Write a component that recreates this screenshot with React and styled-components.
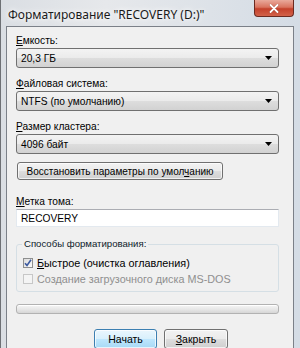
import React from 'react';
import styled, {createGlobalStyle} from 'styled-components';

const Global = createGlobalStyle`
  html, body {
    margin: 0;
    padding: 0;
  }
  body {
    background: #dfe3e8;
    font-family: "Noto Sans", "Open Sans", sans-serif;
    color: #000;
  }
`;

const Window = styled.div`
  width: 300px;
  height: 348px;
  overflow: hidden;
  display: flex;
  flex-direction: column;
  box-sizing: border-box;
  border-left: 1px solid #6d7074;
  background: linear-gradient(90deg, #dadee3 0%, #e6e8eb 35%, #dde2e8 70%, #d4dce5 100%);
`;

const TitleBar = styled.div`
  height: 26px;
  flex: none;
  display: flex;
  justify-content: space-between;
  align-items: flex-start;
  padding: 0 6px 0 7px;
`;

const Title = styled.div`
  margin-top: 7px;
  font-size: 12px;
  line-height: 15px;
  color: #1a1a1a;
  white-space: nowrap;
  text-shadow: 0 0 8px #fff, 0 0 4px #fff;
`;

const Close = styled.div`
  width: 40px;
  height: 17px;
  box-sizing: border-box;
  border: 1px solid #6b2a20;
  border-top: none;
  border-radius: 0 0 4px 4px;
  background: linear-gradient(180deg, #e9a99b 0%, #d9735f 45%, #c4412b 55%, #d2624a 100%);
  display: flex;
  align-items: center;
  justify-content: center;
`;

const Client = styled.div`
  flex: 1;
  margin: 0 6px 0 5px;
  border: 1px solid #7b8088;
  border-bottom: none;
  background: #f0f0f0;
  padding: 7px 14px 0 9px;
  display: flex;
  flex-direction: column;
  font-family: "Liberation Sans", Arial, sans-serif;
  font-size: 10.2px;
  white-space: nowrap;
`;

const Label = styled.div`
  line-height: 14px;
  height: 14px;
  color: #000;
  margin-top: ${p => p.$top || 0}px;
`;

const Key = styled.span`
  text-decoration: underline;
  text-underline-offset: 1px;
`;

const Combo = styled.div`
  height: 20px;
  box-sizing: border-box;
  border: 1px solid #707070;
  border-radius: 3px;
  background: linear-gradient(180deg, #f3f3f3 0%, #ebebeb 48%, #dddddd 52%, #d2d2d2 100%);
  display: flex;
  align-items: center;
  justify-content: space-between;
  padding: 0 6px 0 4px;
  margin-bottom: ${p => p.$after || 0}px;
`;

const Button = styled.div`
  width: ${p => p.$w}px;
  height: ${p => p.$h || 20}px;
  box-sizing: border-box;
  border: 1px solid ${p => (p.$default ? '#3c7fb1' : '#707070')};
  border-radius: 3px;
  background: ${p =>
    p.$default
      ? 'linear-gradient(180deg, #eaf6fd 0%, #d9f0fc 48%, #bee6fd 52%, #a7d9f5 100%)'
      : 'linear-gradient(180deg, #f2f2f2 0%, #ebebeb 48%, #dddddd 52%, #cfcfcf 100%)'};
  box-shadow: inset 0 0 0 1px rgba(255, 255, 255, 0.7);
  display: flex;
  align-items: center;
  justify-content: center;
  font-size: 10.5px;
  flex: none;
`;

const ResetButton = styled(Button)`
  margin: 8px 0 0 1px;
  font-size: 10px;
`;

const TextBox = styled.div`
  height: 18px;
  box-sizing: border-box;
  border: 1px solid #e3e9ef;
  border-top-color: #abadb3;
  background: #fff;
  display: flex;
  align-items: center;
  padding-left: 4px;
`;

const Group = styled.fieldset`
  margin: 10px 0 0;
  padding: 4px 6px 4px;
  border: 1px solid #d5dfe5;
  border-radius: 3px;
`;

const Legend = styled.legend`
  margin-left: -1px;
  padding: 0 2px;
  line-height: 14px;
  font-size: 9.6px;
  color: #0e1b2b;
`;

const CheckRow = styled.div`
  height: 16px;
  display: flex;
  align-items: center;
  gap: 4px;
  font-size: 10.8px;
  color: ${p => (p.$disabled ? '#8f8f8f' : '#000')};
`;

const Box = styled.div`
  width: 10px;
  height: 10px;
  box-sizing: border-box;
  border: 1px solid ${p => (p.$disabled ? '#c7c7c7' : '#8e8f8f')};
  background: ${p => (p.$disabled ? '#f4f4f4' : 'linear-gradient(135deg, #dcdcdc 0%, #fbfbfb 100%)')};
  display: flex;
  align-items: center;
  justify-content: center;
  flex: none;
`;

const Progress = styled.div`
  margin-top: 12px;
  height: 10px;
  box-sizing: border-box;
  border: 1px solid #b2b2b2;
  border-radius: 3px;
  background: linear-gradient(180deg, #f6f6f6 0%, #e8e8e8 50%, #d6d6d6 100%);
  box-shadow: inset 0 1px 0 #fff;
`;

const Actions = styled.div`
  margin-top: 15px;
  padding-left: 78px;
  display: flex;
  gap: 7px;
`;

const Arrow = () => (
  <svg width="7" height="4" viewBox="0 0 7 4">
    <path d="M0 0 H7 L3.5 4 Z" fill="#000" />
  </svg>
);

const Check = () => (
  <svg width="8" height="8" viewBox="0 0 8 8">
    <path d="M1 4.2 L3 6.4 L7 0.8" fill="none" stroke="#3c5aa0" strokeWidth="1.6" />
  </svg>
);

const CloseIcon = () => (
  <svg width="10" height="9" viewBox="0 0 10 9">
    <path d="M1.5 1 L8.5 8 M8.5 1 L1.5 8" stroke="#5a1a10" strokeWidth="2.6" strokeLinecap="round" opacity="0.35" />
    <path d="M1.5 1 L8.5 8 M8.5 1 L1.5 8" stroke="#fff" strokeWidth="1.8" strokeLinecap="round" />
  </svg>
);

const fields = [
  {key: 'Е', rest: 'мкость:', value: '20,3 ГБ'},
  {key: 'Ф', rest: 'айловая система:', value: 'NTFS (по умолчанию)'},
  {key: 'Р', rest: 'азмер кластера:', value: '4096 байт'},
];

const App = () => (
  <Window>
    <Global />
    <TitleBar>
      <Title>Форматирование "RECOVERY (D:)"</Title>
      <Close>
        <CloseIcon />
      </Close>
    </TitleBar>
    <Client>
      {fields.map((f, i) => (
        <React.Fragment key={f.value}>
          <Label>
            <Key>{f.key}</Key>
            {f.rest}
          </Label>
          <Combo $after={i < 2 ? 9 : 0}>
            <span>{f.value}</span>
            <Arrow />
          </Combo>
        </React.Fragment>
      ))}

      <ResetButton $w={206} $h={18}>
        <span>
          Восстановить параметры по умол<Key>ч</Key>анию
        </span>
      </ResetButton>

      <Label $top={15}>
        <Key>М</Key>етка тома:
      </Label>
      <TextBox>RECOVERY</TextBox>

      <Group>
        <Legend>Способы форматирования:</Legend>
        <CheckRow>
          <Box>
            <Check />
          </Box>
          <span>
            <Key>Б</Key>ыстрое (очистка оглавления)
          </span>
        </CheckRow>
        <CheckRow $disabled>
          <Box $disabled />
          <span>Создание загрузочного диска MS-DOS</span>
        </CheckRow>
      </Group>

      <Progress />

      <Actions>
        <Button $w={63} $default>
          Начать
        </Button>
        <Button $w={64}>
          <span>
            <Key>З</Key>акрыть
          </span>
        </Button>
      </Actions>
    </Client>
  </Window>
);

export default App;
